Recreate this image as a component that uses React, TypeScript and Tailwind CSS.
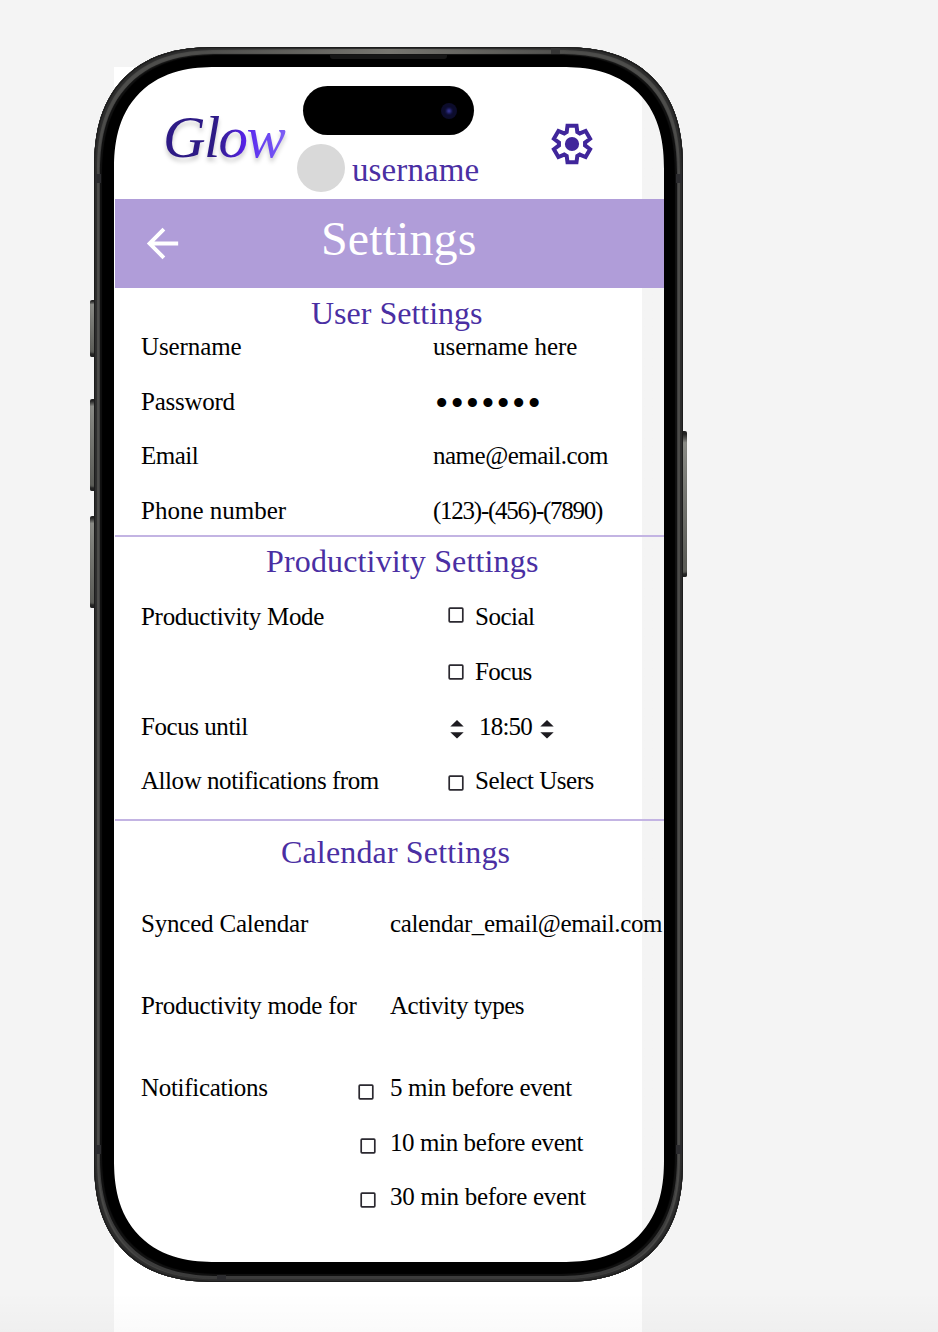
import type { ReactNode } from "react";
import { MdArrowBack } from "react-icons/md";

function Gear() {
  const tooth = [
    [-5.3, -12],
    [-4.5, -18.3],
    [4.5, -18.3],
    [5.3, -12],
  ];
  const points = [0, 60, 120, 180, 240, 300]
    .flatMap((deg) => {
      const a = (deg * Math.PI) / 180;
      return tooth.map(
        ([x, y]) =>
          `${(x * Math.cos(a) - y * Math.sin(a)).toFixed(2)},${(x * Math.sin(a) + y * Math.cos(a)).toFixed(2)}`
      );
    })
    .join(" ");
  return (
    <svg viewBox="-21 -21 42 42" className="h-[42px] w-[42px]" aria-hidden="true">
      <polygon points={points} fill="none" stroke="#40269b" strokeWidth="4" strokeMiterlimit="8" />
      <circle r="7.1" fill="#40269b" />
    </svg>
  );
}

function Stepper({ className = "" }: { className?: string }) {
  return (
    <svg viewBox="0 0 14 19" className={`h-[19px] w-[14px] ${className}`} fill="#1d1b20" aria-hidden="true">
      <path d="M0.3 6.6 7 0l6.7 6.6z" />
      <path d="M0.3 12.2h13.4L7 18.6z" />
    </svg>
  );
}

function Checkbox({ className = "" }: { className?: string }) {
  return (
    <svg viewBox="0 0 16 16" className={`h-4 w-4 shrink-0 ${className}`} aria-hidden="true">
      <rect x="1.2" y="1.2" width="13.6" height="13.6" rx="0.8" fill="none" stroke="#2b2930" strokeWidth="1.7" />
    </svg>
  );
}

function Heading({ children, className = "" }: { children: ReactNode; className?: string }) {
  return <h2 className={`text-[32px] leading-9 text-[#4a2fa3] ${className}`}>{children}</h2>;
}

function Divider() {
  return <div className="ml-px h-[2px] shrink-0 bg-[#c3b4e3]" />;
}

function Label({ children, className = "" }: { children?: ReactNode; className?: string }) {
  return <span className={className}>{children}</span>;
}

function SideButton({ className }: { className: string }) {
  return <div className={`absolute w-[5px] bg-linear-to-b from-[#222] from-2% via-[#8a8b86] via-8% to-[#5c5d58] to-90% shadow-[inset_0_-5px_2px_-1px_#222] ${className}`} />;
}

export default function App() {
  return (
    <div className="relative h-[1332px] w-[938px] overflow-hidden bg-[#f4f4f4] pt-[47px] pl-[94px] font-['Liberation_Serif',serif]">
      <div className="absolute top-[67px] left-[114px] h-[1265px] w-[528px] bg-white" />
      <div className="absolute inset-x-0 bottom-0 h-10 bg-linear-to-b from-transparent to-black/2" />
      <SideButton className="top-[300px] left-[90px] h-[57px] rounded-l-[2px]" />
      <SideButton className="top-[399px] left-[90px] h-[92px] rounded-l-[2px]" />
      <SideButton className="top-[516px] left-[90px] h-[92px] rounded-l-[2px]" />
      <SideButton className="top-[431px] left-[682px] h-[146px] rounded-r-[2px]" />

      <div className="relative h-[1235px] w-[589px] rounded-[104px] bg-black p-5 shadow-[inset_0_0_0_1px_#1c1c1c,inset_0_0_1px_3px_#2c2c2c,inset_0_2px_1px_5px_#4e4e4c,inset_0_0_0_6px_#3c3c3c,inset_0_0_1px_8px_#111111] supports-[corner-shape:squircle]:rounded-[122px] supports-[corner-shape:squircle]:[corner-shape:superellipse(1.27)]">
        <div className="absolute top-[2px] left-[110px] h-[5px] w-[369px] bg-linear-to-r from-[#4e4e4c]/0 via-[#777670] to-[#4e4e4c]/0" />
        <div className="absolute top-[8px] left-[236px] h-[4px] w-[117px] rounded-b-[3px] bg-[#161616]" />
        <div className="absolute top-[1px] left-[457px] h-[6px] w-[9px] bg-[#353535]" />
        <div className="absolute bottom-[1px] left-[123px] h-[6px] w-[9px] bg-[#2b2b2e]" />
        <div className="absolute top-[127px] left-[1px] h-[9px] w-[6px] bg-[#2b2b2e]" />
        <div className="absolute top-[127px] right-[1px] h-[9px] w-[6px] bg-[#2b2b2e]" />
        <div className="absolute bottom-[128px] left-[1px] h-[9px] w-[6px] bg-[#2b2b2e]" />
        <div className="absolute right-[1px] bottom-[128px] h-[9px] w-[6px] bg-[#2b2b2e]" />

        <div className="flex h-[1195px] w-[550px] flex-col overflow-hidden rounded-[88px] bg-linear-to-r from-white from-[528px] to-[#f4f4f4] to-[528px] whitespace-nowrap text-black supports-[corner-shape:squircle]:rounded-[102px] supports-[corner-shape:squircle]:[corner-shape:superellipse(1.25)]">
          <header className="flex h-[132px] shrink-0 items-start pl-[49px]">
            <div className="w-[134px] pt-[35px]">
              <span className="inline-block bg-linear-to-r from-[#2d1a85] from-40% via-[#5a22ee] via-65% to-[#8567f5] bg-clip-text pr-2 text-[59px] leading-[70px] tracking-[-1.7px] text-transparent italic drop-shadow-[0_4px_2px_rgba(0,0,0,0.2)]">
                Glow
              </span>
            </div>
            <div className="mt-[77px] h-12 w-12 rounded-full bg-[#d9d9d9]" />
            <span className="mt-[85px] ml-[7px] w-[199px] text-[33px] leading-9 tracking-[0.1px] text-[#4a2fa3]">username</span>
            <div className="mt-[56px]">
              <Gear />
            </div>
          </header>

          <div className="ml-px grid h-[89px] shrink-0 grid-cols-[206px_1fr] bg-[#b09dd9] text-white">
            <MdArrowBack className="mt-[21px] ml-6 h-[47px] w-[47px]" />
            <h1 className="pt-[13px] text-[48px] leading-[54px] tracking-[0.1px]">Settings</h1>
          </div>

          <section className="h-[247px] shrink-0">
            <Heading className="h-[44px] pt-[7px] pl-[197px]">User Settings</Heading>
            <div className="grid auto-rows-[54.6px] grid-cols-[292px_1fr] pl-[27px] text-[25px] leading-[30px]">
              <Label className="tracking-[-0.1px]">Username</Label>
              <Label className="tracking-[-0.05px]">username here</Label>
              <Label className="tracking-[-0.25px]">Password</Label>
              <span className="pt-px pl-[2px] text-[38px] tracking-[2.1px]">•••••••</span>
              <Label className="tracking-[-0.5px]">Email</Label>
              <Label className="tracking-[-0.5px]">name@email.com</Label>
              <Label>Phone number</Label>
              <Label className="tracking-[-1.25px]">(123)-(456)-(7890)</Label>
            </div>
          </section>
          <Divider />

          <section className="h-[282px] shrink-0">
            <Heading className="h-[65px] pt-[6px] pl-[152px] tracking-[0.15px]">Productivity Settings</Heading>
            <div className="grid auto-rows-[54.8px] grid-cols-[307px_27px_1fr] pl-[27px] text-[25px] leading-[30px]">
              <Label className="tracking-[-0.3px]">Productivity Mode</Label>
              <Checkbox className="mt-[5px]" />
              <Label className="tracking-[-0.5px]">Social</Label>
              <Label />
              <Checkbox className="mt-[7px]" />
              <Label className="tracking-[-0.6px]">Focus</Label>
              <Label className="tracking-[-0.45px]">Focus until</Label>
              <Stepper className="mt-[8px] ml-[2px]" />
              <div className="flex pl-1">
                <Label className="w-[61px] tracking-[-0.8px]">18:50</Label>
                <Stepper className="mt-[8px]" />
              </div>
              <Label className="tracking-[-0.45px]">Allow notifications from</Label>
              <Checkbox className="mt-[9px]" />
              <Label className="tracking-[-0.45px]">Select Users</Label>
            </div>
          </section>
          <Divider />

          <section className="flex-1">
            <Heading className="h-[88px] pt-[13px] pl-[167px] tracking-[0.15px]">Calendar Settings</Heading>
            <div className="grid grid-cols-[217px_32px_1fr] grid-rows-[82px_82px_54.7px_54.7px_54.7px] pl-[27px] text-[25px] leading-[30px]">
              <Label className="tracking-[-0.2px]">Synced Calendar</Label>
              <Label />
              <Label className="tracking-[-0.35px]">calendar_email@email.com</Label>
              <Label className="tracking-[-0.25px]">Productivity mode for</Label>
              <Label />
              <Label className="tracking-[-0.5px]">Activity types</Label>
              <Label className="tracking-[-0.3px]">Notifications</Label>
              <Checkbox className="mt-[11px]" />
              <Label className="tracking-[-0.35px]">5 min before event</Label>
              <Label />
              <Checkbox className="mt-[10px] ml-[2px]" />
              <Label className="tracking-[-0.4px]">10 min before event</Label>
              <Label />
              <Checkbox className="mt-[10px] ml-[2px]" />
              <Label className="tracking-[-0.25px]">30 min before event</Label>
            </div>
          </section>
        </div>

        <div className="absolute top-[39px] left-[209px] flex h-[49px] w-[171px] items-center justify-end rounded-full bg-black pr-[17px]">
          <div className="flex h-4 w-4 items-center justify-center rounded-full bg-[#0c0c2b]">
            <div className="h-2 w-2 rounded-full bg-[radial-gradient(circle,#30308a_15%,#10103c_60%)]" />
          </div>
        </div>
      </div>
    </div>
  );
}
